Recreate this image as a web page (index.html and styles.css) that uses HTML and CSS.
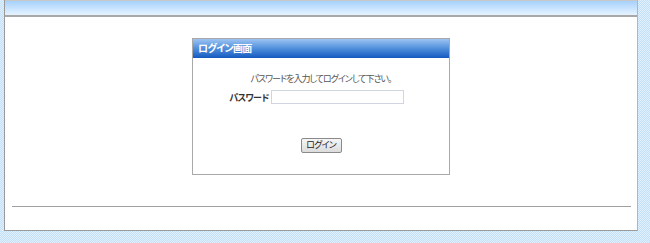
FILE: index.html
```html
<!DOCTYPE html>
<html lang="ja">
<head>
<meta charset="utf-8">
<link rel="stylesheet" href="styles.css">
</head>
<body>
<div class="page">
  <div class="topbar"></div>
  <div class="content">
    <div class="loginbox">
      <div class="loginbox-title">ログイン画面</div>
      <div class="loginbox-body">
        <p class="message">パスワードを入力してログインして下さい。</p>
        <div class="field">
          <label class="field-label" for="pw">パスワード</label>
          <input class="field-input" id="pw" type="password">
        </div>
        <div class="actions">
          <button class="btn" type="button">ログイン</button>
        </div>
      </div>
    </div>
  </div>
  <hr class="rule">
</div>
</body>
</html>
```

FILE: styles.css
```css
html, body {
  margin: 0;
  padding: 0;
}
body {
  width: 650px;
  height: 243px;
  overflow: hidden;
  background-color: #d3e9fa;
  background-image: repeating-conic-gradient(#c4e0f8 0 25%, #e0f0fc 0 50%);
  background-size: 2px 2px;
  font-family: "Noto Sans CJK JP", "Noto Sans", sans-serif;
  font-feature-settings: "palt";
  font-size: 11px;
  color: #333;
}
.page {
  margin: 0 12px 0 4px;
  height: 231px;
  background: #fff;
  border-left: 1px solid #9a9a9a;
  border-right: 1px solid #b5b5b5;
  border-bottom: 1px solid #9a9a9a;
  box-sizing: border-box;
  display: flex;
  flex-direction: column;
}
.topbar {
  height: 17px;
  box-sizing: border-box;
  border-top: 1px solid #c8c8c8;
  border-bottom: 2px solid #a8a8a8;
  background: linear-gradient(#a6d0fb, #cde6ff 60%, #e6f3ff);
}
.content {
  display: flex;
  justify-content: center;
  padding-top: 21px;
}
.loginbox {
  width: 258px;
  height: 137px;
  box-sizing: border-box;
  border: 1px solid #a9a9a9;
  display: flex;
  flex-direction: column;
}
.loginbox-title {
  height: 19px;
  line-height: 18px;
  padding-left: 5px;
  color: #fff;
  font-weight: bold;
  font-size: 10px;
  letter-spacing: -0.7px;
  background: linear-gradient(#9cc4f2, #4f8fdc 50%, #1559c0);
}
.loginbox-body {
  flex: 1;
  display: flex;
  flex-direction: column;
  align-items: center;
}
.message {
  margin: 14px 0 0;
  color: #555;
  font-size: 9px;
  line-height: 13px;
  letter-spacing: -1px;
}
.field {
  display: flex;
  align-items: center;
  gap: 2px;
  margin-top: 5px;
  margin-left: -9px;
}
.field-label {
  font-weight: bold;
  font-size: 9px;
  letter-spacing: -0.6px;
  color: #333;
}
.field-input {
  width: 133px;
  height: 14px;
  box-sizing: border-box;
  margin: 0;
  padding: 0;
  border: 1px solid #cfd6df;
  background: #fff;
}
.actions {
  margin-top: 31px;
}
.btn {
  width: 41px;
  height: 15px;
  padding: 0;
  margin: 0;
  white-space: nowrap;
  font-family: inherit;
  font-feature-settings: "palt";
  font-size: 9px;
  letter-spacing: -0.8px;
  line-height: 12px;
  color: #222;
  border: 1px solid #8a8a8a;
  border-radius: 2px;
  background: linear-gradient(#f6f6f6, #dcdcdc);
}
.rule {
  margin: 31px 6px 0 7px;
  border: 0;
  border-top: 1px solid #a0a0a0;
  height: 0;
}
```
